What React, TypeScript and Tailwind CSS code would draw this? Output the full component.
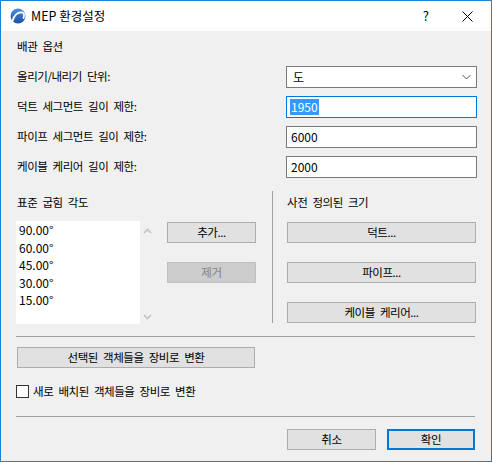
import { useState } from 'react';

const font = "font-['Noto_Sans_CJK_KR','Noto_Sans',sans-serif]";
// Korean text in the reference is a little tighter per glyph, with wider word gaps
const ko = 'text-[11.5px] tracking-[-0.45px] [word-spacing:3px]';

function AppLogo() {
  return (
    <svg width="16" height="16" viewBox="0 0 16 16">
      <defs>
        <linearGradient id="lg" x1="0" y1="0" x2="0" y2="1">
          <stop offset="0" stopColor="#4a8fe0" />
          <stop offset="1" stopColor="#1c4fa8" />
        </linearGradient>
      </defs>
      <circle cx="8" cy="8" r="7.5" fill="url(#lg)" />
      <path d="M2.5 13 C4 7 8 3.5 12.5 4.5 C14 5 14.5 7 13.5 10" fill="none" stroke="#fff" strokeWidth="1.8" strokeLinecap="round" />
    </svg>
  );
}

function Chevron({ up }: { up?: boolean }) {
  return (
    <svg width="9" height="6" viewBox="0 0 9 6">
      <path
        d={up ? 'M1 5 L4.5 1.5 L8 5' : 'M1 1 L4.5 4.5 L8 1'}
        fill="none"
        stroke="#c2c2c2"
        strokeWidth="1.6"
      />
    </svg>
  );
}

function Btn({ label, width, disabled }: { label: string; width: string; disabled?: boolean }) {
  return (
    <div
      className={`flex h-[21px] items-center justify-center border ${ko} ${width} ${
        disabled ? 'border-[#bfbfbf] bg-[#cccccc] text-[#838383]' : 'border-[#adadad] bg-[#e1e1e1] text-black'
      }`}
    >
      {label}
    </div>
  );
}

const rows = [
  { label: '올리기/내리기 단위:', value: '도', kind: 'select' },
  { label: '덕트 세그먼트 길이 제한:', value: '1950', kind: 'focus' },
  { label: '파이프 세그먼트 길이 제한:', value: '6000', kind: 'input' },
  { label: '케이블 케리어 길이 제한:', value: '2000', kind: 'input' },
];

const angles = ['90.00°', '60.00°', '45.00°', '30.00°', '15.00°'];

export default function App() {
  const [checked, setChecked] = useState(false);

  return (
    <div className={`flex h-[462px] w-[492px] flex-col border border-[#1883d7] bg-[#f0f0f0] text-black ${font}`}>
      {/* title bar */}
      <div className="flex h-[30px] items-center bg-white">
        <div className="ml-[9px] flex items-center">
          <AppLogo />
        </div>
        <span className="ml-[5px] text-[12.5px]">MEP 환경설정</span>
        <span className="ml-auto mr-[33px] text-[13px]">?</span>
        <svg className="mr-[18px]" width="11" height="11" viewBox="0 0 11 11">
          <path d="M0.5 0.5 L10.5 10.5 M10.5 0.5 L0.5 10.5" stroke="#000" strokeWidth="1" />
        </svg>
      </div>

      <div className="flex flex-col pl-[15px]">
        <div className={`mt-[7px] h-[16px] pl-[1px] leading-[16px] ${ko}`}>배관 옵션</div>

        <div className="mt-[12px] flex flex-col gap-[8px]">
          {rows.map((r) => (
            <div key={r.label} className="flex h-[22px] items-center">
              <span className={`w-[270px] pl-[1px] ${ko}`}>{r.label}</span>
              {r.kind === 'select' ? (
                <div className="flex h-[22px] w-[191px] items-center border border-[#7a7a7a] bg-white pl-[6px] pr-[5px] text-[12px]">
                  <span>{r.value}</span>
                  <svg className="ml-auto" width="9" height="6" viewBox="0 0 9 6">
                    <path d="M0.5 1 L4.5 5 L8.5 1" fill="none" stroke="#555" strokeWidth="1" />
                  </svg>
                </div>
              ) : (
                <div
                  className={`flex h-[22px] w-[191px] items-center border bg-white pl-[3px] text-[12px] ${
                    r.kind === 'focus' ? 'border-[#0078d7]' : 'border-[#7a7a7a]'
                  }`}
                >
                  {r.kind === 'focus' ? (
                    <span className="bg-[#3399ff] px-[1px] leading-[16px] text-white">{r.value}</span>
                  ) : (
                    <span className="px-[1px]">{r.value}</span>
                  )}
                </div>
              )}
            </div>
          ))}
        </div>

        {/* bend angles / predefined sizes */}
        <div className="mt-[13px] flex h-[133px]">
          <div className="flex w-[241px] flex-col pt-[3px]">
            <div className={`h-[16px] pl-[1px] leading-[16px] ${ko}`}>표준 굽힘 각도</div>
            <div className="mt-[11px] flex">
              <div className="h-[103px] w-[124px] bg-white pl-[3px]">
                {angles.map((a) => (
                  <div key={a} className="h-[17.5px] text-[12px] leading-[17.5px]">
                    {a}
                  </div>
                ))}
              </div>
              <div className="flex w-[27px] flex-col items-start pl-[3px] pt-[7px]">
                <Chevron up />
                <div className="mt-[80px]">
                  <Chevron />
                </div>
              </div>
              <div className="flex flex-col gap-[19px] pt-[1px]">
                <Btn label="추가..." width="w-[89px]" />
                <Btn label="제거" width="w-[89px]" disabled />
              </div>
            </div>
          </div>
          <div className="ml-[15px] h-[132px] w-px bg-[#a0a0a0]" />
          <div className="ml-[14px] flex flex-col pt-[3px]">
            <div className={`h-[16px] leading-[16px] ${ko}`}>사전 정의된 크기</div>
            <div className="mt-[12px] flex flex-col gap-[19px]">
              <Btn label="덕트..." width="w-[189px]" />
              <Btn label="파이프..." width="w-[189px]" />
              <Btn label="케이블 케리어..." width="w-[189px]" />
            </div>
          </div>
        </div>

        <div className="mt-[12px] h-px w-[459px] bg-[#a0a0a0]" />

        <div className="mt-[10px] pl-[1px]">
          <Btn label="선택된 객체들을 장비로 변환" width="w-[238px]" />
        </div>

        <label className="mt-[17px] flex h-[13px] cursor-pointer items-center">
          <span
            onClick={() => setChecked(!checked)}
            className="flex h-[13px] w-[13px] items-center justify-center border border-[#333] bg-white text-[10px] leading-none"
          >
            {checked ? '✓' : ''}
          </span>
          <span className={`ml-[4px] ${ko}`}>새로 배치된 객체들을 장비로 변환</span>
        </label>

        <div className="mt-[18px] h-px w-[459px] bg-[#a0a0a0]" />

        <div className="mt-[12px] flex pl-[271px]">
          <Btn label="취소" width="w-[89px]" />
          <div className={`ml-[11px] flex h-[21px] w-[88px] items-center justify-center border-2 border-[#0078d7] bg-[#e1e1e1] ${ko}`}>
            확인
          </div>
        </div>
      </div>
    </div>
  );
}
